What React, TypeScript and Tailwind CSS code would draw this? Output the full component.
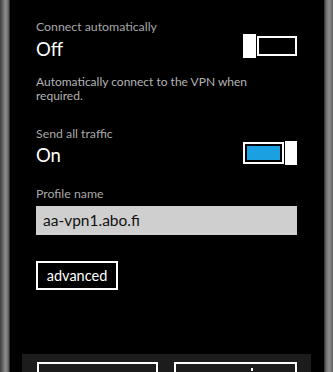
import React from "react";

const font = { fontFamily: 'Lato, "Open Sans", sans-serif' };

function Toggle({ on }: { on: boolean }) {
  return (
    <div className="flex h-[24px] w-[54px] items-center">
      {on ? (
        <>
          <div className="flex h-[22px] w-[41px] items-stretch border-2 border-white p-[2px]">
            <div className="flex-1 bg-[#1ba1e2]" />
          </div>
          <div className="ml-[1px] h-[24px] w-[12px] bg-white" />
        </>
      ) : (
        <>
          <div className="h-[24px] w-[13px] bg-white" />
          <div className="ml-[1px] h-[20px] w-[40px] border-2 border-white" />
        </>
      )}
    </div>
  );
}

export default function App() {
  return (
    <div className="flex h-[372px] w-[333px] overflow-hidden bg-black" style={font}>
      <div className="w-[10px] bg-[linear-gradient(to_right,#3e3e3e,#6a6a6a_30%,#8c8c8c_55%,#6e6e6e_80%,#1e1e1e)]" />
      <div className="flex flex-1 flex-col bg-black">
        <div className="flex flex-col pl-[26px] pr-[27px]">
          <div className="mt-[20px] text-[12.3px] leading-[14px] text-[#a8a8a8]">Connect automatically</div>
          <div className="flex h-[24px] items-start justify-between">
            <div className="mt-[3px] text-[18.5px] leading-[24px] text-white">Off</div>
            <Toggle on={false} />
          </div>
          <div className="mt-[17px] text-[12px] leading-[14px] text-[#b4b4b4]">
            Automatically connect to the VPN when
            <br />
            required.
          </div>
          <div className="mt-[24px] text-[12.3px] leading-[14px] text-[#a8a8a8]">Send all traffic</div>
          <div className="flex h-[24px] items-start justify-between">
            <div className="mt-[2px] text-[18.5px] leading-[24px] text-white">On</div>
            <Toggle on={true} />
          </div>
          <div className="mt-[22px] text-[12.3px] leading-[14px] text-[#a8a8a8]">Profile name</div>
          <div className="mt-[5px] flex h-[29px] items-center bg-[#cfcfcf] pl-[7px] text-[15.5px] leading-[29px] text-[#111]">
            aa-vpn1.abo.fi
          </div>
          <div className="mt-[26px] flex h-[29px] w-[82px] items-center justify-center border-2 border-white text-[14.5px] leading-[25px] text-white">
            advanced
          </div>
        </div>
        <div className="mt-auto ml-[12px] mr-[13px] flex h-[18px] gap-[16px] bg-[#1b1c1b] pl-[15px] pt-[8px]">
          <div className="h-[30px] w-[121px] border-2 border-white" />
          <div className="flex h-[30px] w-[123px] justify-center border-2 border-white pt-[4px]">
            <div className="ml-[33px] h-[3px] w-[2px] bg-white" />
          </div>
        </div>
      </div>
      <div className="w-[9px] bg-[linear-gradient(to_right,#2a2a2a,#6e6e6e_25%,#8c8c8c_55%,#7a7a7a_80%,#5a5a5a)]" />
    </div>
  );
}
